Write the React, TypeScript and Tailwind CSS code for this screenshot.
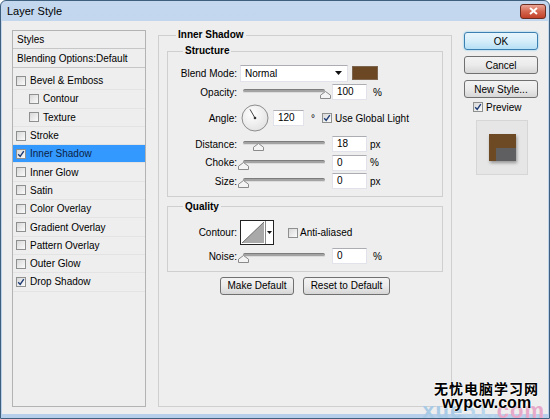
import React from 'react';

const FONT = "font-['Liberation_Sans',Arial,sans-serif]";

interface StyleItem {
  name: string;
  checked?: boolean;
  sub?: boolean;
  selected?: boolean;
}

const items: StyleItem[] = [
  { name: 'Bevel & Emboss' },
  { name: 'Contour', sub: true },
  { name: 'Texture', sub: true },
  { name: 'Stroke' },
  { name: 'Inner Shadow', checked: true, selected: true },
  { name: 'Inner Glow' },
  { name: 'Satin' },
  { name: 'Color Overlay' },
  { name: 'Gradient Overlay' },
  { name: 'Pattern Overlay' },
  { name: 'Outer Glow' },
  { name: 'Drop Shadow', checked: true },
];

function Check({ checked }: { checked?: boolean }) {
  return (
    <span className="w-[10px] h-[10px] shrink-0 border border-[#8e8f8f] bg-gradient-to-br from-[#d8d8d8] to-[#fbfbfb] flex items-center justify-center">
      {checked && (
        <svg width="8" height="8" viewBox="0 0 8 8">
          <path d="M1.2 4.2 L3.2 6.4 L6.8 1.2" fill="none" stroke="#1d3b75" strokeWidth="1.4" />
        </svg>
      )}
    </span>
  );
}

function Slider({ pct }: { pct: number }) {
  return (
    <div className="relative w-[90px] h-full shrink-0">
      <div className="absolute left-[3px] w-[82px] top-[calc(50%-3px)] h-[4px] bg-[#a3a3a3] border-t border-[#7d7d7d] border-b border-b-[#dcdcdc] rounded-[2px]" />
      <svg className="absolute top-[calc(50%-1px)]" style={{ left: 3 + pct * 82 - 5 }} width="11" height="8" viewBox="0 0 11 8">
        <path d="M0.5 7.5 V4.2 L5.5 0.5 L10.5 4.2 V7.5 Z" fill="#f4f4f4" stroke="#8a8a8a" />
      </svg>
    </div>
  );
}

function Field({ value, w = 'w-[35px]' }: { value: string; w?: string }) {
  return (
    <div className={`${w} h-[16px] shrink-0 bg-white border border-[#e2e3ea] border-t-[#abadb3] pl-[4px] leading-[14px]`}>
      {value}
    </div>
  );
}

function Label({ text }: { text: string }) {
  return <span className="w-[69px] shrink-0 text-right">{text}</span>;
}

function Btn({ children, w }: { children: React.ReactNode; w: string }) {
  return (
    <div className={`${w} h-[18px] rounded-[3px] border border-[#707070] bg-gradient-to-b from-[#f3f3f3] via-[#ebebeb] to-[#d6d6d6] flex items-center justify-center`}>
      {children}
    </div>
  );
}

function Dial() {
  const cx = 14, cy = 14, r = 13;
  const a = (120 * Math.PI) / 180;
  return (
    <svg width="28" height="28" viewBox="0 0 28 28" className="shrink-0">
      <defs>
        <radialGradient id="dg" cx="40%" cy="35%" r="70%">
          <stop offset="0" stopColor="#ffffff" />
          <stop offset="1" stopColor="#e2e2e2" />
        </radialGradient>
      </defs>
      <circle cx={cx} cy={cy} r={r} fill="url(#dg)" stroke="#8c8c8c" />
      <line x1={cx} y1={cy} x2={cx + Math.cos(a) * 10} y2={cy - Math.sin(a) * 10} stroke="#444" strokeWidth="1" />
      <circle cx={cx} cy={cy} r="1.3" fill="#333" />
    </svg>
  );
}

export default function App() {
  return (
    <div className={`${FONT} text-[10px] text-black relative w-[550px] h-[419px] bg-gradient-to-b from-[#c3d7ee] to-[#b7cfea] border border-[#3f5f7f] rounded-t-[6px] flex flex-col overflow-hidden`}>
      {/* title bar */}
      <div className="h-[20px] flex items-center justify-between pl-[6px] pr-[3px] shrink-0">
        <span className="text-[11px]">Layer Style</span>
        <div className="w-[26px] h-[15px] rounded-[3px] border border-[#6b2c22] bg-gradient-to-b from-[#eaa596] via-[#d4664f] to-[#c13f27] flex items-center justify-center">
          <svg width="9" height="8" viewBox="0 0 9 8">
            <path d="M1 1 L8 7 M8 1 L1 7" stroke="#fff" strokeWidth="2" />
          </svg>
        </div>
      </div>

      {/* body */}
      <div className="flex-1 mx-[1px] mb-[4px] bg-[#eeeeee] flex items-start pl-[10px]">
        {/* styles list */}
        <div className="mt-[9px] w-[134px] h-[377px] border border-[#b3b3b3] flex flex-col shrink-0">
          <div className="h-[18px] border-b border-[#c6c6c6] pl-[4px] flex items-center">Styles</div>
          <div className="h-[19px] border-b border-[#c6c6c6] pl-[4px] flex items-center">Blending Options:Default</div>
          <div className="pt-[4px]">
            {items.map((it) => (
              <div
                key={it.name}
                className={`h-[18.3px] flex items-center gap-[4px] border-b border-[#e3e3e3] ${it.sub ? 'pl-[16px]' : 'pl-[3px]'} ${it.selected ? 'bg-[#3399ff] text-[#0b1e44]' : ''}`}
              >
                <Check checked={it.checked} />
                <span>{it.name}</span>
              </div>
            ))}
          </div>
        </div>

        {/* settings */}
        <fieldset className="ml-[12px] mt-[8px] w-[294px] h-[378px] border border-[#cfcfcf] px-[8px] shrink-0">
          <legend className="ml-[9px] px-[2px] font-bold leading-[12px]">Inner Shadow</legend>

          <fieldset className="mt-[4px] border border-[#cfcfcf] pt-[6px] pb-[5px]">
            <legend className="ml-[15px] px-[2px] font-bold leading-[12px]">Structure</legend>

            <div className="h-[20px] flex items-center">
              <Label text="Blend Mode:" />
              <div className="ml-[3px] w-[108px] h-[17px] bg-white border border-[#e2e3ea] border-t-[#abadb3] pl-[4px] pr-[5px] flex items-center justify-between">
                <span>Normal</span>
                <svg width="7" height="4" viewBox="0 0 7 4"><path d="M0 0 H7 L3.5 4 Z" fill="#111" /></svg>
              </div>
              <div className="ml-[4px] w-[26px] h-[14px] bg-[#6b4723] border border-[#7d6550]" />
            </div>

            <div className="h-[18px] flex items-center">
              <Label text="Opacity:" />
              <div className="ml-[3px] h-full flex items-center">
                <Slider pct={1} />
                <div className="ml-[2px]"><Field value="100" /></div>
                <span className="ml-[6px]">%</span>
              </div>
            </div>

            <div className="h-[34px] flex items-center">
              <Label text="Angle:" />
              <div className="ml-[4px] flex items-center">
                <Dial />
                <div className="ml-[4px]"><Field value="120" w="w-[31px]" /></div>
                <span className="ml-[7px]">°</span>
                <div className="ml-[7px] flex items-center gap-[3px]">
                  <Check checked />
                  <span>Use Global Light</span>
                </div>
              </div>
            </div>

            {[
              { l: 'Distance:', v: '18', u: 'px', p: 0.18 },
              { l: 'Choke:', v: '0', u: '%', p: 0 },
              { l: 'Size:', v: '0', u: 'px', p: 0 },
            ].map((r) => (
              <div key={r.l} className="h-[18.5px] flex items-center">
                <Label text={r.l} />
                <div className="ml-[3px] h-full flex items-center">
                  <Slider pct={r.p} />
                  <div className="ml-[2px]"><Field value={r.v} /></div>
                  <span className="ml-[3px]">{r.u}</span>
                </div>
              </div>
            ))}
          </fieldset>

          <fieldset className="mt-[4px] border border-[#cfcfcf] pt-[6px] pb-[5px]">
            <legend className="ml-[15px] px-[2px] font-bold leading-[12px]">Quality</legend>

            <div className="h-[28px] flex items-center">
              <Label text="Contour:" />
              <div className="ml-[3px] w-[34px] h-[25px] bg-white border border-[#222] flex">
                <svg width="24" height="23" viewBox="0 0 24 23" className="shrink-0">
                  <path d="M1 22 L23 1 V22 Z" fill="#a9a9a9" />
                  <path d="M1 22 L23 1" stroke="#555" strokeWidth="0.8" />
                </svg>
                <div className="flex-1 border-l border-[#888] flex items-center justify-center">
                  <svg width="5" height="3" viewBox="0 0 5 3"><path d="M0 0 H5 L2.5 3 Z" fill="#111" /></svg>
                </div>
              </div>
              <div className="ml-[14px] flex items-center gap-[2px]">
                <Check />
                <span>Anti-aliased</span>
              </div>
            </div>

            <div className="h-[19px] flex items-center">
              <Label text="Noise:" />
              <div className="ml-[3px] h-full flex items-center">
                <Slider pct={0} />
                <div className="ml-[2px]"><Field value="0" /></div>
                <span className="ml-[6px]">%</span>
              </div>
            </div>
          </fieldset>

          <div className="mt-[5px] flex justify-center gap-[9px]">
            <Btn w="w-[74px]">Make Default</Btn>
            <Btn w="w-[87px]">Reset to Default</Btn>
          </div>
        </fieldset>

        {/* buttons */}
        <div className="ml-[12px] mt-[11px] w-[74px] flex flex-col shrink-0">
          <div className="h-[18px] rounded-[3px] border border-[#3c7fb1] bg-gradient-to-b from-[#e8f5fc] via-[#d6eefa] to-[#b6dff5] shadow-[0_0_2px_#67c4ef] flex items-center justify-center">
            OK
          </div>
          <div className="mt-[6px]"><Btn w="w-full">Cancel</Btn></div>
          <div className="mt-[6px]"><Btn w="w-full">New Style...</Btn></div>
          <div className="mt-[4px] h-[10px] pl-[9px] flex items-center gap-[3px]">
            <Check checked />
            <span>Preview</span>
          </div>
          <div className="mt-[8px] ml-[12px] w-[52px] h-[55px] bg-[#e6e6e6] border border-[#d6d6d6] flex items-center justify-center">
            <div className="w-[27px] h-[27px] bg-[#6d4924] shadow-[1px_2px_3px_rgba(0,0,0,0.35)] flex flex-col justify-end items-end">
              <div className="w-[20px] h-[13px] bg-[#5f5f61]" />
            </div>
          </div>
        </div>
      </div>

      {/* watermark */}
      <div className="absolute right-[4px] bottom-[-4px] text-[22px] font-bold tracking-[1px] leading-none font-['Liberation_Sans',Arial,sans-serif]">
        <span className="text-[#a9cbe6]">xue</span>
        <span className="text-[#b9d6ec]">51.</span>
        <span className="text-[#e7a9c9]">com</span>
      </div>
      <div className="absolute right-[10px] bottom-[7px] flex flex-col items-center leading-none [text-shadow:0_0_2px_#fff,0_0_2px_#fff]">
        <span className="text-[14px] font-bold tracking-[1px] font-['Noto_Sans_CJK_SC',sans-serif]">无忧电脑学习网</span>
        <span className="text-[16px] font-bold font-['Liberation_Sans',Arial,sans-serif]">wypcw.com</span>
      </div>
    </div>
  );
}
